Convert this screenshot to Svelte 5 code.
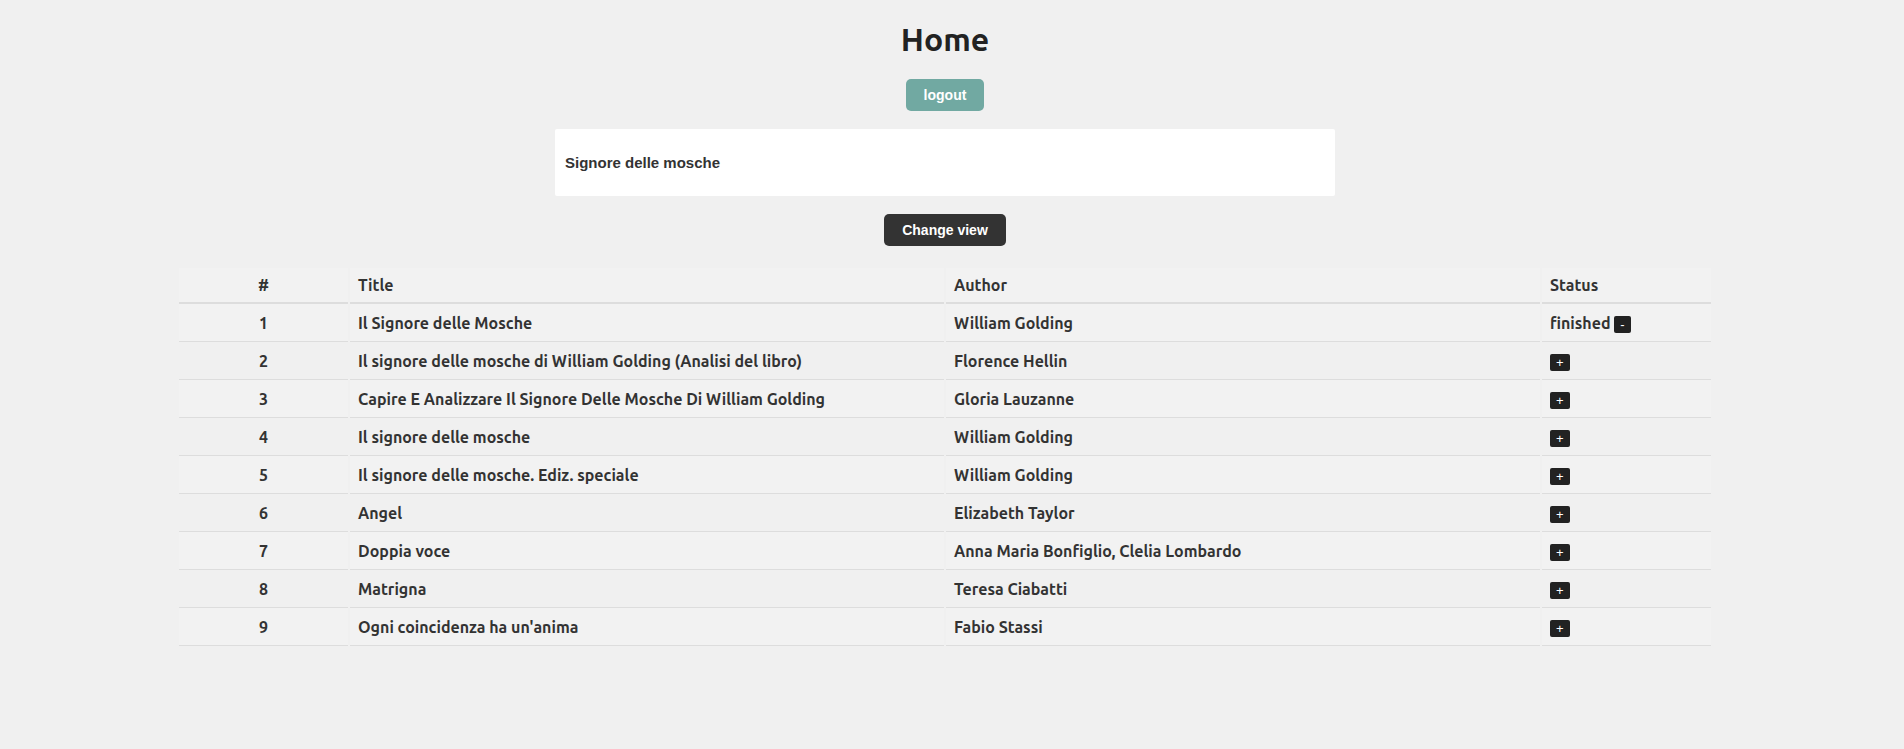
<script>
  let query = $state('Signore delle mosche');

  let books = $state([
    { title: 'Il Signore delle Mosche', author: 'William Golding', status: 'finished' },
    { title: 'Il signore delle mosche di William Golding (Analisi del libro)', author: 'Florence Hellin', status: '' },
    { title: 'Capire E Analizzare Il Signore Delle Mosche Di William Golding', author: 'Gloria Lauzanne', status: '' },
    { title: 'Il signore delle mosche', author: 'William Golding', status: '' },
    { title: 'Il signore delle mosche. Ediz. speciale', author: 'William Golding', status: '' },
    { title: 'Angel', author: 'Elizabeth Taylor', status: '' },
    { title: 'Doppia voce', author: 'Anna Maria Bonfiglio, Clelia Lombardo', status: '' },
    { title: 'Matrigna', author: 'Teresa Ciabatti', status: '' },
    { title: "Ogni coincidenza ha un'anima", author: 'Fabio Stassi', status: '' }
  ]);

  function toggle(book) {
    book.status = book.status ? '' : 'finished';
  }
</script>

<main class="page">
  <h1>Home</h1>
  <button class="btn logout" type="button">logout</button>
  <input class="search" type="text" aria-label="Search books" bind:value={query} />
  <button class="btn view" type="button">Change view</button>

  <table class="books">
    <colgroup>
      <col class="narrow" />
      <col />
      <col />
      <col class="narrow" />
    </colgroup>
    <thead>
      <tr>
        <th class="num" scope="col">#</th>
        <th scope="col">Title</th>
        <th scope="col">Author</th>
        <th scope="col">Status</th>
      </tr>
    </thead>
    <tbody>
      {#each books as book, i}
        <tr>
          <td class="num">{i + 1}</td>
          <td>{book.title}</td>
          <td>{book.author}</td>
          <td>
            {#if book.status}{book.status}{' '}{/if}<button class="mark" type="button" onclick={() => toggle(book)}>{book.status ? '-' : '+'}</button>
          </td>
        </tr>
      {/each}
    </tbody>
  </table>
</main>

<style>
  :global(body) {
    margin: 0;
    background: #f0f0f0;
  }

  .page {
    display: flex;
    flex-direction: column;
    align-items: center;
    gap: 18px;
    padding: 21px 14px 40px 0;
    color: #333;
    font-family: Ubuntu, 'Noto Sans', sans-serif;
    font-size: 16px;
    font-weight: 600;
    line-height: 20px;
  }

  h1 {
    margin: 0 0 4px;
    color: #222;
    font-size: 32px;
    font-weight: 600;
    line-height: 36px;
  }

  .btn {
    height: 32px;
    padding: 0 18px;
    border: 0;
    border-radius: 5px;
    color: #fff;
    font: bold 14px 'Liberation Sans', Arial, sans-serif;
    cursor: pointer;
  }

  .logout {
    background: #71a9a2;
  }

  .view {
    background: #333;
  }

  .search {
    box-sizing: border-box;
    width: calc(40% + 24px);
    height: 67px;
    padding: 0 10px;
    border: 0;
    border-radius: 2px;
    background: #fff;
    color: #333;
    font: bold 15px 'Liberation Sans', Arial, sans-serif;
  }

  .books {
    width: calc(80% + 24px);
    margin-top: 4px;
    border-collapse: separate;
    border-spacing: 2px 0;
    table-layout: fixed;
  }

  .narrow {
    width: 169px;
  }

  th,
  td {
    padding: 8px;
    border-bottom: 1px solid #ddd;
    text-align: left;
  }

  th {
    padding: 7px 8px;
    border-bottom-width: 2px;
    background: #f2f2f2;
    font-weight: 600;
  }

  td {
    height: 21px;
  }

  tbody tr:nth-child(odd) td {
    background: #f2f2f2;
  }

  th.num,
  td.num {
    text-align: center;
  }

  .mark {
    padding: 1px 6px;
    border: 0;
    border-radius: 2px;
    background: #222;
    color: #fff;
    font: 13px/15px 'Liberation Sans', Arial, sans-serif;
    cursor: pointer;
  }
</style>
